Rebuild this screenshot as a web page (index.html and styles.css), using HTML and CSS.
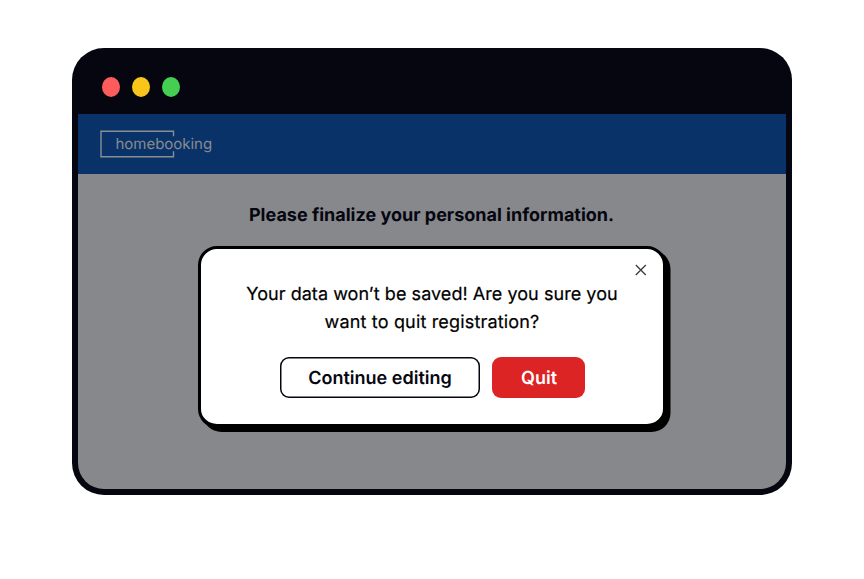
FILE: index.html
```html
<!DOCTYPE html>
<html lang="en">
<head>
<meta charset="utf-8">
<title>homebooking</title>
<link rel="stylesheet" href="styles.css">
</head>
<body>
<main class="window">
  <div class="titlebar">
    <span class="dot dot-red"></span>
    <span class="dot dot-yellow"></span>
    <span class="dot dot-green"></span>
  </div>
  <div class="page">
    <header class="brand-bar">
      <div class="logo">
        <svg class="logo-frame" width="76" height="28" viewBox="0 0 76 28" fill="none" stroke="#8c8e92" stroke-width="1.4"><path d="M73.5 6.3V1.3H1v25.4h72.5v-5.5"/></svg>
        <span class="logo-text">homebooking</span>
      </div>
    </header>
    <h1 class="heading">Please finalize your personal information.</h1>
    <section class="dialog" role="dialog">
      <button class="close" aria-label="Close"><svg width="12" height="12" viewBox="0 0 12 12" stroke="#3d3e45" stroke-width="1.35"><path d="M.8 1l10 10M10.8 1L.8 11"/></svg></button>
      <p class="message">Your data won’t be saved! Are you sure you<br><span class="message-end">want to quit registration?</span></p>
      <div class="actions">
        <button class="btn btn-outline">Continue editing</button>
        <button class="btn btn-danger">Quit</button>
      </div>
    </section>
  </div>
</main>
</body>
</html>
```
FILE: styles.css
```css
* { box-sizing: border-box; }
body {
  margin: 0;
  padding: 48px 72px 0;
  background: #fff;
  font-family: Inter, "Liberation Sans", sans-serif;
  color: #05060f;
  text-rendering: geometricPrecision;
}
.window {
  height: 447px;
  padding: 0 6px 6px;
  border-radius: 32px;
  background: #05060f;
  display: flex;
  flex-direction: column;
}
.titlebar {
  height: 66px;
  padding: 29px 0 0 24px;
  display: flex;
  gap: 12px;
}
.dot { width: 18px; height: 20px; border-radius: 50%; }
.dot-red { background: #fe5c5c; }
.dot-yellow { background: #f9c51b; }
.dot-green { background: #45ce52; }
.page {
  flex: 1;
  background: #87888c;
  border-radius: 0 0 26px 26px;
  overflow: hidden;
}
.brand-bar { height: 60px; padding: 16px 0 0 22px; background: #093368; }
.logo { position: relative; width: 112px; height: 28px; padding-left: 15.5px; }
.logo-frame { position: absolute; left: 0; top: 0; }
.logo-text {
  position: relative;
  display: block;
  font-size: 15px;
  line-height: 27px;
  font-weight: 400;
  letter-spacing: -0.02px;
  color: #878b92;
}
.heading {
  margin: 28px 0 0;
  padding-right: 1px;
  text-align: center;
  font-size: 18px;
  line-height: 28px;
  font-weight: 700;
}
.dialog {
  position: relative;
  width: 468px;
  height: 182px;
  margin: 16px 0 0 120px;
  padding: 32px 0 0;
  border: 3px solid #000;
  border-bottom-width: 4px;
  border-radius: 19px;
  background: #fff;
  box-shadow: 4.5px 4px 0 #000;
}
.close {
  position: absolute;
  right: 16px;
  top: 15px;
  width: 12px;
  height: 12px;
  padding: 0;
  border: 0;
  background: none;
}
.close svg { display: block; }
.message {
  margin: 0;
  text-align: center;
  font-size: 18px;
  line-height: 28px;
  font-weight: 400;
  color: #000;
  letter-spacing: 0.05px;
  -webkit-text-stroke: 0.2px #000;
}
.message-end { letter-spacing: 0.17px; }
.actions { display: flex; gap: 12px; padding: 20px 0 0 79px; }
.btn {
  height: 41px;
  padding: 2px 0 0;
  border: 0;
  border-radius: 9px;
  font: 600 18px/24px Inter, "Liberation Sans", sans-serif;
  text-rendering: geometricPrecision;
}
.btn-outline { width: 200px; box-shadow: inset 0 0 0 1.5px #05060f; background: #fff; color: #05060f; }
.btn-danger { width: 93px; padding-left: 1px; background: #dc2424; color: #fff; }
```
